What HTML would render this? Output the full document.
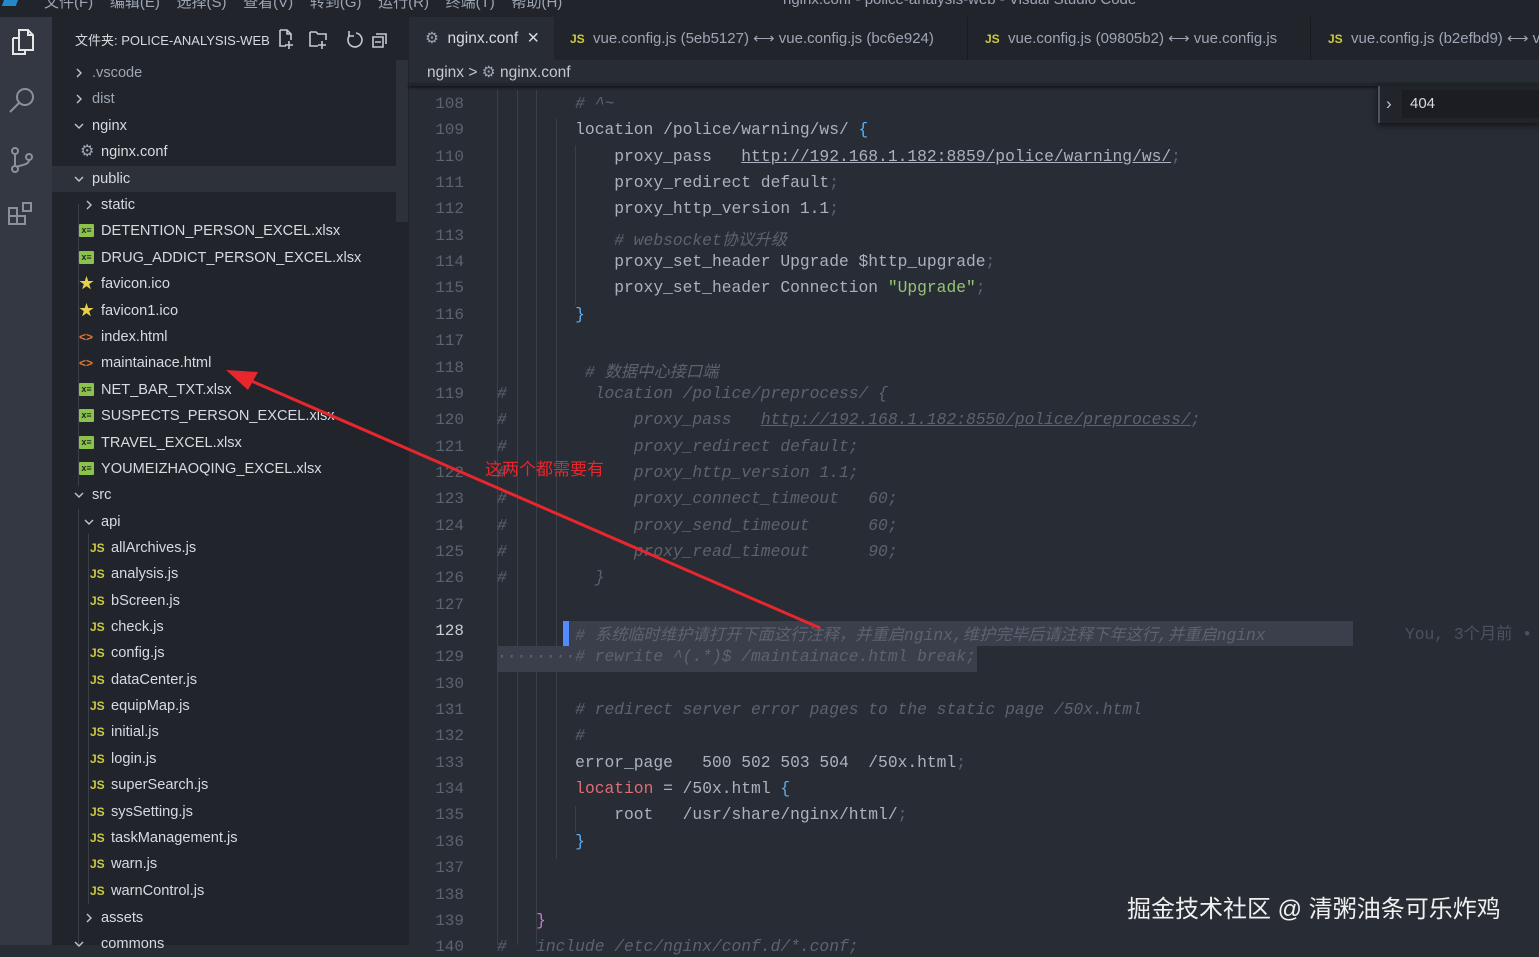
<!DOCTYPE html>
<html><head><meta charset="utf-8"><style>
*{margin:0;padding:0;box-sizing:border-box}
body{width:1539px;height:945px;overflow:hidden;background:#282c34;position:relative;font-family:"Liberation Sans","Noto Sans CJK SC",sans-serif;color:#d7dae0}
.abs{position:absolute}
.title{left:0;top:0;width:1539px;height:17px;background:#21252b}
.menu{top:-9px;font-size:15px;color:#9da5b4;white-space:nowrap}
.act{left:0;top:17px;width:52px;height:928px;background:#333842}
.side{left:52px;top:17px;width:357px;height:928px;background:#21252b}
.row{position:absolute;left:52px;width:344px;height:26px;font-size:14.6px;line-height:26px;white-space:nowrap;color:#d7dae0}
.row span{position:absolute}
.tabs{left:409px;top:17px;width:1130px;height:43px;background:#21252b}
.tab{position:absolute;top:17px;height:43px;font-size:15px;line-height:43px;white-space:nowrap;color:#9da5b4}
.js{color:#cbcb41;font-weight:bold;font-size:12px}
.code{font-family:"Liberation Mono","Noto Sans CJK SC",monospace;font-size:16.3px;white-space:pre;color:#abb2bf}
.ln{position:absolute;left:410px;width:54px;text-align:right;font-family:"Liberation Mono",monospace;font-size:16px;color:#5c6370}
.cl{position:absolute;left:497px}
.c{color:#5c6370;font-style:italic}
.sc{color:#5c6370}
.b{color:#61afef}
.g{position:absolute;width:1px;background:#3b4048}
</style></head><body>
<div class="abs title"></div>
<div class="abs menu" style="left:44px">文件(F)&nbsp;&nbsp;&nbsp;&nbsp;编辑(E)&nbsp;&nbsp;&nbsp;&nbsp;选择(S)&nbsp;&nbsp;&nbsp;&nbsp;查看(V)&nbsp;&nbsp;&nbsp;&nbsp;转到(G)&nbsp;&nbsp;&nbsp;&nbsp;运行(R)&nbsp;&nbsp;&nbsp;&nbsp;终端(T)&nbsp;&nbsp;&nbsp;&nbsp;帮助(H)</div>
<div class="abs menu" style="left:783px">nginx.conf - police-analysis-web - Visual Studio Code</div>
<div class="abs" style="left:4px;top:-6px;width:14px;height:12px;background:#2489ca;transform:skewX(-20deg)"></div>
<div class="abs act"></div>
<svg class="abs" style="left:0;top:17px" width="52" height="230" fill="none" stroke="#d7dae0" stroke-width="2">
<g stroke="#e6e6e6"><path d="M13 21h6M13 21v16h12v-4"/><path d="M19 13h9l5 5v15H19z"/><path d="M28 13v5h5"/></g>
<g stroke="#8b919a"><circle cx="25" cy="80" r="8"/><path d="M19 86l-9 9"/>
<circle cx="15" cy="134" r="3"/><circle cx="15" cy="152" r="3"/><circle cx="29" cy="140" r="3"/><path d="M15 137v12M29 143c0 5-8 5-13 7"/>
<path d="M9 191h8v8H9zM9 199h8v8H9zM17 199h8v8h-8zM23 186h8v8h-8z"/></g>
</svg>
<div class="abs side"></div>
<div class="abs" style="left:396px;top:60px;width:12px;height:162px;background:#2c313a"></div>
<div class="abs" style="left:75px;top:30px;font-size:13px;color:#d7dae0;white-space:nowrap">文件夹: POLICE-ANALYSIS-WEB</div>
<svg class="abs" style="left:276px;top:27px" width="120" height="24" fill="none" stroke="#c5c8ce" stroke-width="1.6">
<path d="M4 3h7l4 4v6M11 3v4h4M4 3v16h6M13 14v8M9 18h8"/>
<path d="M34 5h6l2 2h8v6M34 5v14h8M46 14v8M42 18h8"/>
<path d="M80 6a7 7 0 1 1-6 2M73 4v5h5"/>
<path d="M100 7h10v10M97 10h10v10H97zM99 15h6"/>
</svg>
<div class="row" style="top:166px;background:#2c313a"></div>
<div class="abs" style="left:78px;top:204px;width:1px;height:282px;background:#3b4048"></div>
<div class="abs" style="left:88px;top:534px;width:1px;height:370px;background:#3b4048"></div>
<div class="abs" style="left:78px;top:509px;width:1px;height:437px;background:#3b4048"></div>
<div id="tree"></div>
<div class="abs tabs"></div>
<div class="abs" style="left:409px;top:17px;width:145px;height:43px;background:#282c34"></div>
<div class="tab" style="left:425px;color:#d7dae0;font-size:15.5px"><span style="color:#9da5b4">⚙</span>&nbsp;&nbsp;nginx.conf&nbsp;&nbsp;✕</div>
<div class="tab" style="left:570px"><span class="js">JS</span>&nbsp;&nbsp;vue.config.js (5eb5127) ⟷ vue.config.js (bc6e924)</div>
<div class="abs" style="left:967px;top:17px;width:1px;height:43px;background:#181a1f"></div>
<div class="tab" style="left:985px"><span class="js">JS</span>&nbsp;&nbsp;vue.config.js (09805b2) ⟷ vue.config.js</div>
<div class="abs" style="left:1310px;top:17px;width:1px;height:43px;background:#181a1f"></div>
<div class="tab" style="left:1328px"><span class="js">JS</span>&nbsp;&nbsp;vue.config.js (b2efbd9) ⟷ vue</div>
<div class="abs" style="left:427px;top:63px;font-size:15.5px;color:#c5c8ce;white-space:nowrap">nginx &gt; <span style="color:#9da5b4">⚙</span> nginx.conf</div>
<div class="abs" style="left:409px;top:84px;width:1130px;height:2px;background:#22252b;box-shadow:0 1px 3px #000"></div>
<div id="code"></div>
<div class="abs" style="left:1378px;top:86px;width:161px;height:37px;background:#21252b;border-left:2px solid #4d5361;box-shadow:0 2px 6px #111"></div>
<div class="abs" style="left:1386px;top:94px;font-size:17px;color:#c5c8ce">›</div>
<div class="abs" style="left:1402px;top:90px;width:137px;height:28px;background:#1b1d23"></div>
<div class="abs" style="left:1410px;top:95px;font-size:15px;color:#d7dae0">404</div>
<div class="abs code" style="left:1405px;top:620px;color:#4b5160">You, 3个月前 •</div>
<svg class="abs" style="left:0;top:0" width="1539" height="945">
<line x1="240" y1="376" x2="820" y2="628" stroke="#e8262d" stroke-width="3"/>
<polygon points="226,370 258,372 248,390" fill="#e8262d"/>
</svg>
<div class="abs" style="left:485px;top:455px;font-size:17px;color:#e8262d;white-space:nowrap">这两个都需要有</div>
<div class="abs" style="left:1127px;top:889px;font-size:24px;color:#f0f0f0;white-space:nowrap">掘金技术社区 @ 清粥油条可乐炸鸡</div>
<script>
var T=[
[72,78,92,'>','.vscode','', '#9da5b4'],[98,78,92,'>','dist','','#9da5b4'],[125,78,92,'v','nginx'],
[151,0,101,'','nginx.conf','gear'],[178,78,92,'v','public'],[204,88,101,'>','static'],
[230,0,101,'','DETENTION_PERSON_EXCEL.xlsx','x'],[257,0,101,'','DRUG_ADDICT_PERSON_EXCEL.xlsx','x'],
[283,0,101,'','favicon.ico','star'],[310,0,101,'','favicon1.ico','star'],[336,0,101,'','index.html','h'],
[362,0,101,'','maintainace.html','h'],[389,0,101,'','NET_BAR_TXT.xlsx','x'],[415,0,101,'','SUSPECTS_PERSON_EXCEL.xlsx','x'],
[442,0,101,'','TRAVEL_EXCEL.xlsx','x'],[468,0,101,'','YOUMEIZHAOQING_EXCEL.xlsx','x'],[494,78,92,'v','src'],[521,88,101,'v','api']];
['allArchives.js','analysis.js','bScreen.js','check.js','config.js','dataCenter.js','equipMap.js','initial.js','login.js','superSearch.js','sysSetting.js','taskManagement.js','warn.js','warnControl.js'].forEach(function(n,i){T.push([547+i*26.35,0,111,'',n,'js'])});
T.push([917,88,101,'>','assets']);T.push([943,78,101,'v','commons']);
var h='';
T.forEach(function(t){var y=t[0]-12;h+='<div class="row" style="top:'+y+'px;left:0;width:400px">';
if(t[3]){h+='<svg style="position:absolute;left:'+(t[1]-4)+'px;top:8px" width="10" height="10" fill="none" stroke="#c0c4cc" stroke-width="1.4">'+(t[3]=='>'?'<path d="M3 1l4 4-4 4"/>':'<path d="M1 3l4 4 4-4"/>')+'</svg>';}
var ic=t[5],ix=t[2]-22;
if(ic=='gear')h+='<span style="left:'+(ix+1)+'px;color:#9da5b4;font-size:16px">⚙</span>';
if(ic=='x')h+='<span style="left:'+ix+'px;top:6px;width:15px;height:13px;background:#8bc34a;border-radius:1px;color:#21252b;font-size:9px;line-height:13px;font-weight:bold;text-align:center">x≡</span>';
if(ic=='star')h+='<span style="left:'+ix+'px;color:#e6d14b;font-size:15px">★</span>';
if(ic=='h')h+='<span style="left:'+ix+'px;color:#e37933;font-size:12px;font-weight:bold">&lt;&gt;</span>';
if(ic=='js')h+='<span class="js" style="left:'+(ix+1)+'px">JS</span>';
h+='<span style="left:'+t[2]+'px;color:'+(t[6]||'#d7dae0')+'">'+t[4]+'</span></div>';});
document.getElementById('tree').innerHTML=h;
var W=9.78,B=497,L=26.35,Y0=106;
var C={108:'        <span class="c"># ^~</span>',
109:'        location /police/warning/ws/ <span class="b">{</span>',
110:'            proxy_pass   <u>http://192.168.1.182:8859/police/warning/ws/</u><span class="sc">;</span>',
111:'            proxy_redirect default<span class="sc">;</span>',
112:'            proxy_http_version 1.1<span class="sc">;</span>',
113:'            <span class="c"># websocket协议升级</span>',
114:'            proxy_set_header Upgrade $http_upgrade<span class="sc">;</span>',
115:'            proxy_set_header Connection <span style="color:#98c379">"Upgrade"</span><span class="sc">;</span>',
116:'        <span class="b">}</span>',117:'',
118:'         <span class="c"># 数据中心接口端</span>',
119:'<span class="c">#         location /police/preprocess/ {</span>',
120:'<span class="c">#             proxy_pass   <u>http://192.168.1.182:8550/police/preprocess/</u>;</span>',
121:'<span class="c">#             proxy_redirect default;</span>',
122:'<span class="c">#             proxy_http_version 1.1;</span>',
123:'<span class="c">#             proxy_connect_timeout   60;</span>',
124:'<span class="c">#             proxy_send_timeout      60;</span>',
125:'<span class="c">#             proxy_read_timeout      90;</span>',
126:'<span class="c">#         }</span>',127:'',
128:'        <span class="c"># 系统临时维护请打开下面这行注释，并重启nginx,维护完毕后请注释下年这行,并重启nginx</span>',
129:'<span class="c">········# rewrite ^(.*)$ /maintainace.html break;</span>',130:'',
131:'        <span class="c"># redirect server error pages to the static page /50x.html</span>',
132:'        <span class="c">#</span>',
133:'        error_page   500 502 503 504  /50x.html<span class="sc">;</span>',
134:'        <span style="color:#e06c75">location</span> = /50x.html <span class="b">{</span>',
135:'            root   /usr/share/nginx/html/<span class="sc">;</span>',
136:'        <span class="b">}</span>',137:'',138:'',
139:'    <span style="color:#c678dd">}</span>',
140:'<span class="c">#   include /etc/nginx/conf.d/*.conf;</span>'};
var o='';
[0,1,2].forEach(function(k){o+='<div class="g" style="left:'+(B+k*2*W)+'px;top:90px;height:855px"></div>'});
o+='<div class="g" style="left:'+(B+6*W)+'px;top:119px;height:740px"></div>';
o+='<div class="g" style="left:'+(B+8*W)+'px;top:145px;height:160px"></div>';
o+='<div class="g" style="left:'+(B+8*W)+'px;top:806px;height:26px"></div>';
o+='<div class="abs" style="left:568px;top:'+(Y0+20*L-12)+'px;width:785px;height:25px;background:#3a3f4b"></div>';
o+='<div class="abs" style="left:497px;top:'+(Y0+21*L-13)+'px;width:480px;height:26px;background:#3a3f4b"></div>';
o+='<div class="abs" style="left:563px;top:'+(Y0+20*L-12)+'px;width:6px;height:25px;background:#528bff"></div>';
for(var n=108;n<=140;n++){var y=Y0+(n-108)*L-11;
o+='<div class="ln" style="top:'+y+'px;'+(n==128?'color:#c8ccd4':'')+'">'+n+'</div>';
o+='<div class="cl code" style="top:'+(y-1)+'px">'+C[n]+'</div>';}
document.getElementById('code').innerHTML=o;
</script>
</body></html>
